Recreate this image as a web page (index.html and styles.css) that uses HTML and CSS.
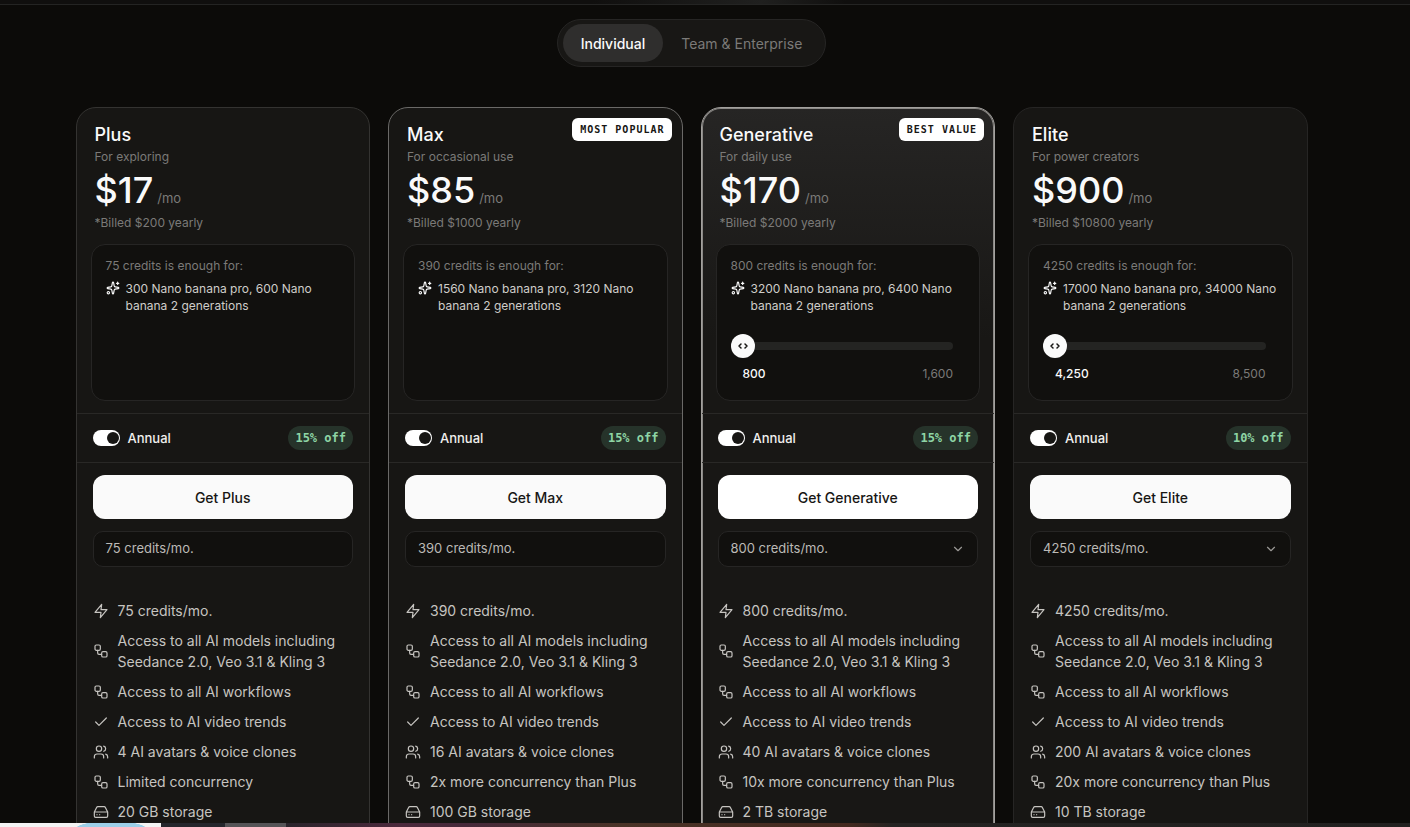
FILE: index.html
```html
<!DOCTYPE html>
<html lang="en">
<head>
<meta charset="utf-8">
<meta name="viewport" content="width=device-width, initial-scale=1">
<title>Pricing</title>
<link rel="stylesheet" href="styles.css">
</head>
<body>
<svg class="sprite" aria-hidden="true">
  <symbol id="sparkles" viewBox="0 0 24 24"><path d="M11.017 2.814a1 1 0 0 1 1.966 0l1.051 5.558a2 2 0 0 0 1.594 1.594l5.558 1.051a1 1 0 0 1 0 1.966l-5.558 1.051a2 2 0 0 0-1.594 1.594l-1.051 5.558a1 1 0 0 1-1.966 0l-1.051-5.558a2 2 0 0 0-1.594-1.594l-5.558-1.051a1 1 0 0 1 0-1.966l5.558-1.051a2 2 0 0 0 1.594-1.594z"/><path d="M20 2v4M22 4h-4"/><circle cx="4" cy="20" r="2"/></symbol>
  <symbol id="zap" viewBox="0 0 24 24"><path d="M13 2 3 14h9l-1 8 10-12h-9z"/></symbol>
  <symbol id="workflow" viewBox="0 0 24 24"><rect width="8" height="8" x="3" y="3" rx="2"/><path d="M7 11v4a2 2 0 0 0 2 2h4"/><rect width="8" height="8" x="13" y="13" rx="2"/></symbol>
  <symbol id="check" viewBox="0 0 24 24"><path d="M20 6 9 17l-5-5"/></symbol>
  <symbol id="users" viewBox="0 0 24 24"><path d="M16 21v-2a4 4 0 0 0-4-4H6a4 4 0 0 0-4 4v2"/><circle cx="9" cy="7" r="4"/><path d="M22 21v-2a4 4 0 0 0-3-3.870M16 3.130a4 4 0 0 1 0 7.750"/></symbol>
  <symbol id="drive" viewBox="0 0 24 24"><path d="M22 12H2M5.450 5.110 2 12v6a2 2 0 0 0 2 2h16a2 2 0 0 0 2-2v-6l-3.450-6.890A2 2 0 0 0 16.760 4H7.240a2 2 0 0 0-1.790 1.110zM6 16h.01M10 16h.01"/></symbol>
  <symbol id="chevron" viewBox="0 0 24 24"><path d="m6 9 6 6 6-6"/></symbol>
  <symbol id="handle" viewBox="0 0 24 24"><path d="m10 10-2 2 2 2M14 10l2 2-2 2"/></symbol>
</svg>

<header class="topbar"></header>

<main class="page">
  <div class="tabs" role="tablist">
    <button class="tab tab-active" role="tab" aria-selected="true">Individual</button>
    <button class="tab" role="tab" aria-selected="false">Team &amp; Enterprise</button>
  </div>

  <div class="plans">
    <article class="card card-plus">
      <div class="intro">
        <h2 class="name">Plus</h2>
        <p class="tagline">For exploring</p>
        <p class="price"><span class="amount">$17</span><span class="per">/mo</span></p>
        <p class="billed">*Billed $200 yearly</p>
      </div>
      <section class="quota">
        <p class="quota-title">75 credits is enough for:</p>
        <p class="quota-line"><svg class="spark"><use href="#sparkles"/></svg><span>300 Nano banana pro, 600 Nano banana 2 generations</span></p>
      </section>
      <div class="billing">
        <label class="switch"><input class="toggle" type="checkbox" role="switch" checked>Annual</label>
        <span class="discount">15% off</span>
      </div>
      <div class="actions">
        <button class="buy">Get Plus</button>
        <div class="credits"><div class="field">75 credits/mo.</div></div>
      </div>
      <ul class="features">
        <li><svg class="icon"><use href="#zap"/></svg><span>75 credits/mo.</span></li>
        <li><svg class="icon"><use href="#workflow"/></svg><span>Access to all AI models including Seedance 2.0, Veo 3.1 &amp; Kling 3</span></li>
        <li><svg class="icon"><use href="#workflow"/></svg><span>Access to all AI workflows</span></li>
        <li><svg class="icon"><use href="#check"/></svg><span>Access to AI video trends</span></li>
        <li><svg class="icon"><use href="#users"/></svg><span>4 AI avatars &amp; voice clones</span></li>
        <li><svg class="icon"><use href="#workflow"/></svg><span>Limited concurrency</span></li>
        <li><svg class="icon"><use href="#drive"/></svg><span>20 GB storage</span></li>
      </ul>
    </article>

    <article class="card card-max">
      <span class="ribbon">MOST POPULAR</span>
      <div class="intro">
        <h2 class="name">Max</h2>
        <p class="tagline">For occasional use</p>
        <p class="price"><span class="amount">$85</span><span class="per">/mo</span></p>
        <p class="billed">*Billed $1000 yearly</p>
      </div>
      <section class="quota">
        <p class="quota-title">390 credits is enough for:</p>
        <p class="quota-line"><svg class="spark"><use href="#sparkles"/></svg><span>1560 Nano banana pro, 3120 Nano banana 2 generations</span></p>
      </section>
      <div class="billing">
        <label class="switch"><input class="toggle" type="checkbox" role="switch" checked>Annual</label>
        <span class="discount">15% off</span>
      </div>
      <div class="actions">
        <button class="buy">Get Max</button>
        <div class="credits"><div class="field">390 credits/mo.</div></div>
      </div>
      <ul class="features">
        <li><svg class="icon"><use href="#zap"/></svg><span>390 credits/mo.</span></li>
        <li><svg class="icon"><use href="#workflow"/></svg><span>Access to all AI models including Seedance 2.0, Veo 3.1 &amp; Kling 3</span></li>
        <li><svg class="icon"><use href="#workflow"/></svg><span>Access to all AI workflows</span></li>
        <li><svg class="icon"><use href="#check"/></svg><span>Access to AI video trends</span></li>
        <li><svg class="icon"><use href="#users"/></svg><span>16 AI avatars &amp; voice clones</span></li>
        <li><svg class="icon"><use href="#workflow"/></svg><span>2x more concurrency than Plus</span></li>
        <li><svg class="icon"><use href="#drive"/></svg><span>100 GB storage</span></li>
      </ul>
    </article>

    <article class="card card-generative">
      <span class="ribbon">BEST VALUE</span>
      <div class="intro">
        <h2 class="name">Generative</h2>
        <p class="tagline">For daily use</p>
        <p class="price"><span class="amount">$170</span><span class="per">/mo</span></p>
        <p class="billed">*Billed $2000 yearly</p>
      </div>
      <section class="quota">
        <p class="quota-title">800 credits is enough for:</p>
        <p class="quota-line"><svg class="spark"><use href="#sparkles"/></svg><span>3200 Nano banana pro, 6400 Nano banana 2 generations</span></p>
        <div class="slider">
          <input class="range" type="range" min="800" max="1600" value="800" aria-label="Generative credits">
          <svg class="grip"><use href="#handle"/></svg>
        </div>
        <div class="scale"><span class="low">800</span><span>1,600</span></div>
      </section>
      <div class="billing">
        <label class="switch"><input class="toggle" type="checkbox" role="switch" checked>Annual</label>
        <span class="discount">15% off</span>
      </div>
      <div class="actions">
        <button class="buy">Get Generative</button>
        <div class="credits">
          <select class="field" aria-label="Generative credits per month"><option>800 credits/mo.</option></select>
          <svg class="caret"><use href="#chevron"/></svg>
        </div>
      </div>
      <ul class="features">
        <li><svg class="icon"><use href="#zap"/></svg><span>800 credits/mo.</span></li>
        <li><svg class="icon"><use href="#workflow"/></svg><span>Access to all AI models including Seedance 2.0, Veo 3.1 &amp; Kling 3</span></li>
        <li><svg class="icon"><use href="#workflow"/></svg><span>Access to all AI workflows</span></li>
        <li><svg class="icon"><use href="#check"/></svg><span>Access to AI video trends</span></li>
        <li><svg class="icon"><use href="#users"/></svg><span>40 AI avatars &amp; voice clones</span></li>
        <li><svg class="icon"><use href="#workflow"/></svg><span>10x more concurrency than Plus</span></li>
        <li><svg class="icon"><use href="#drive"/></svg><span>2 TB storage</span></li>
      </ul>
    </article>

    <article class="card card-elite">
      <div class="intro">
        <h2 class="name">Elite</h2>
        <p class="tagline">For power creators</p>
        <p class="price"><span class="amount">$900</span><span class="per">/mo</span></p>
        <p class="billed">*Billed $10800 yearly</p>
      </div>
      <section class="quota">
        <p class="quota-title">4250 credits is enough for:</p>
        <p class="quota-line"><svg class="spark"><use href="#sparkles"/></svg><span>17000 Nano banana pro, 34000 Nano banana 2 generations</span></p>
        <div class="slider">
          <input class="range" type="range" min="4250" max="8500" value="4250" aria-label="Elite credits">
          <svg class="grip"><use href="#handle"/></svg>
        </div>
        <div class="scale"><span class="low">4,250</span><span>8,500</span></div>
      </section>
      <div class="billing">
        <label class="switch"><input class="toggle" type="checkbox" role="switch" checked>Annual</label>
        <span class="discount">10% off</span>
      </div>
      <div class="actions">
        <button class="buy">Get Elite</button>
        <div class="credits">
          <select class="field" aria-label="Elite credits per month"><option>4250 credits/mo.</option></select>
          <svg class="caret"><use href="#chevron"/></svg>
        </div>
      </div>
      <ul class="features">
        <li><svg class="icon"><use href="#zap"/></svg><span>4250 credits/mo.</span></li>
        <li><svg class="icon"><use href="#workflow"/></svg><span>Access to all AI models including Seedance 2.0, Veo 3.1 &amp; Kling 3</span></li>
        <li><svg class="icon"><use href="#workflow"/></svg><span>Access to all AI workflows</span></li>
        <li><svg class="icon"><use href="#check"/></svg><span>Access to AI video trends</span></li>
        <li><svg class="icon"><use href="#users"/></svg><span>200 AI avatars &amp; voice clones</span></li>
        <li><svg class="icon"><use href="#workflow"/></svg><span>20x more concurrency than Plus</span></li>
        <li><svg class="icon"><use href="#drive"/></svg><span>10 TB storage</span></li>
      </ul>
    </article>
  </div>
</main>

<footer class="dock">
  <div class="dock-light"></div>
  <div class="dock-dark"></div>
  <div class="dock-active"></div>
  <div class="dock-rest"></div>
</footer>
</body>
</html>
```

FILE: styles.css
```css
* {
  box-sizing: border-box;
}

body {
  margin: 0;
  height: 100vh;
  display: flex;
  flex-direction: column;
  overflow: hidden;
  background: #0c0b09;
  color: #fafafa;
  font-family: Inter, "Liberation Sans", sans-serif;
}

h2, p, ul {
  margin: 0;
  padding: 0;
}

button, select, input {
  font-family: inherit;
  margin: 0;
}

svg {
  fill: none;
  stroke: currentColor;
  stroke-width: 2;
  stroke-linecap: round;
  stroke-linejoin: round;
  flex: none;
}

.sprite {
  position: absolute;
  width: 0;
  height: 0;
}

.topbar {
  flex: none;
  height: 5px;
  border-bottom: 1px solid #242423;
  background: linear-gradient(90deg, #100f0e 42%, #20201f 54%, #100f0e 60%);
}

.page {
  flex: 1;
  min-height: 0;
  overflow: hidden;
  padding: 14px 27px 0 0;
  display: flex;
  flex-direction: column;
  align-items: center;
}

.tabs {
  flex: none;
  display: flex;
  padding: 4px 5px;
  border: 1px solid #262524;
  border-radius: 24px;
  background: #181715;
}

.tab {
  height: 38px;
  padding: 0 18px;
  border: 0;
  border-radius: 19px;
  background: none;
  color: #7b7a78;
  font-size: 14px;
  font-weight: 400;
}

.tab-active {
  background: #2f2e2d;
  color: #fafafa;
  font-weight: 500;
}

.plans {
  width: 100%;
  max-width: 1232px;
  margin-top: 40px;
  display: grid;
  grid-template-columns: repeat(4, minmax(0, 1fr));
  gap: 18px;
}

.card {
  position: relative;
  padding: 15px 0 24px;
  border: 1px solid #343331;
  border-radius: 20px;
  background: #171614;
}

.card-max {
  border-color: #6a6967;
}

.card-generative {
  border-color: #a3a19e;
  background: linear-gradient(#262524, #181715 230px);
  box-shadow: inset 0 0 0 1px #8b8986;
}

.card-elite {
  border-color: #262524;
}

.ribbon {
  position: absolute;
  top: 10px;
  right: 10px;
  padding: 0 7px 0 8px;
  border-radius: 6px;
  background: #fff;
  color: #171614;
  font: 700 10px/23px "DejaVu Sans Mono", monospace;
  letter-spacing: 1px;
}

.intro {
  padding: 0 18px;
}

.name {
  font-size: 18px;
  line-height: 24px;
  font-weight: 500;
}

.tagline {
  color: #7b7a78;
  font-size: 12px;
  line-height: 20px;
}

.price {
  display: flex;
  align-items: baseline;
  gap: 4px;
  margin-top: 1px;
}

.amount {
  font-size: 36px;
  line-height: 44px;
  font-weight: 500;
}

.per {
  color: #7b7a78;
  font-size: 13px;
}

.billed {
  color: #7b7a78;
  font-size: 12px;
  line-height: 22px;
}

.quota {
  min-height: 157px;
  margin: 10px 14px 12px;
  padding: 12px 14px;
  border: 1px solid #262524;
  border-radius: 14px;
  background: #11100e;
}

.quota-title {
  color: #7b7a78;
  font-size: 12px;
  line-height: 18px;
}

.quota-line {
  display: flex;
  gap: 6px;
  margin-top: 5px;
  color: #cfcdc9;
  font-size: 12px;
  line-height: 17px;
}

.spark {
  width: 14px;
  height: 16px;
  color: #fafafa;
  stroke-width: 2;
}

.slider {
  position: relative;
  margin: 20px 12px 8px 0;
}

.range {
  display: block;
  width: 100%;
  height: 24px;
  appearance: none;
  background: none;
}

.range::-webkit-slider-runnable-track {
  height: 8px;
  border-radius: 4px;
  background: #242422;
}

.range::-webkit-slider-thumb {
  appearance: none;
  width: 24px;
  height: 24px;
  margin-top: -8px;
  border-radius: 50%;
  background: #fafafa;
}

.grip {
  position: absolute;
  left: 0;
  top: 0;
  width: 24px;
  height: 24px;
  color: #171614;
  stroke-width: 1.5;
  pointer-events: none;
}

.scale {
  display: flex;
  justify-content: space-between;
  padding: 0 12px;
  color: #7b7a78;
  font-size: 12px;
  line-height: 16px;
}

.low {
  color: #fafafa;
  font-weight: 500;
}

.billing {
  display: flex;
  align-items: center;
  justify-content: space-between;
  height: 50px;
  padding: 0 16px;
  border-top: 1px solid #292826;
  border-bottom: 1px solid #292826;
}

.switch {
  display: flex;
  align-items: center;
  gap: 8px;
  color: #f0efed;
  font-size: 13px;
  font-weight: 500;
}

.toggle {
  display: grid;
  align-items: center;
  justify-items: end;
  width: 27px;
  height: 16px;
  padding: 0 1px;
  appearance: none;
  border-radius: 8px;
  background: #fff;
}

.toggle::before {
  content: "";
  width: 12px;
  height: 12px;
  border-radius: 50%;
  background: #171614;
}

.discount {
  padding: 0 7px;
  border-radius: 12px;
  background: #26332a;
  color: #8ed5a5;
  font: 700 12px/24px "DejaVu Sans Mono", monospace;
}

.actions {
  display: grid;
  gap: 12px;
  padding: 12px 16px 0;
}

.buy {
  height: 44px;
  border: 0;
  border-radius: 12px;
  background: #fafafa;
  color: #171614;
  font-size: 14px;
  font-weight: 500;
}

.card-generative .buy {
  background: #fff;
}

.credits {
  position: relative;
}

.field {
  display: block;
  width: 100%;
  height: 36px;
  padding: 0 12px 2px;
  appearance: none;
  border: 1px solid #262524;
  border-radius: 10px;
  background: #11100e;
  color: #bcbab6;
  font-size: 13px;
  line-height: 33px;
}

.caret {
  position: absolute;
  top: 11px;
  right: 13px;
  width: 14px;
  height: 14px;
  color: #9b9996;
  pointer-events: none;
}

.features {
  display: grid;
  gap: 9px;
  margin-top: 33px;
  padding: 0 16px;
  list-style: none;
  color: #c6c4c0;
  font-size: 14px;
  line-height: 21px;
}

.features li {
  display: flex;
  align-items: center;
  gap: 9px;
}

.icon {
  width: 16px;
  height: 16px;
  stroke-width: 1.8;
}

.dock {
  flex: none;
  display: flex;
  height: 4px;
}

.dock-light {
  width: 161px;
  background: radial-gradient(ellipse 36px 8px at 111px 6px, #9ccfe8 96%, #f3f3f3 100%);
}

.dock-dark {
  width: 64px;
  background: #24262c;
}

.dock-active {
  width: 61px;
  background: #555457;
}

.dock-rest {
  flex: 1;
  background: linear-gradient(90deg, #29242b, #4c293c 10%, #46293a 16%, #4a3327 30%, #44291f 50%, #242322 54%, #222120);
}
```
